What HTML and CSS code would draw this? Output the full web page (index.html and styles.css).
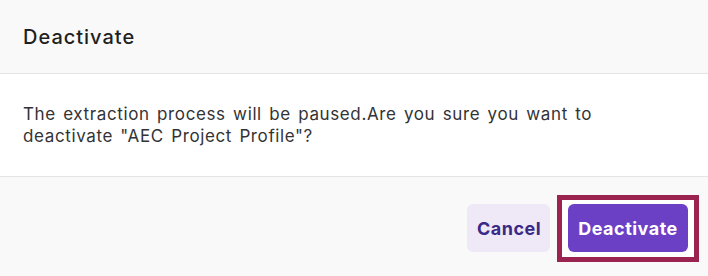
FILE: index.html
```html
<!DOCTYPE html>
<html lang="en">
<head>
<meta charset="utf-8">
<title>Deactivate</title>
<link rel="stylesheet" href="styles.css">
</head>
<body>
<div class="modal">
  <div class="modal-header">
    <h2 class="modal-title">Deactivate</h2>
  </div>
  <div class="modal-body">
    <p class="modal-text">The extraction process will be paused.Are you sure you want to deactivate "AEC Project Profile"?</p>
  </div>
  <div class="modal-footer">
    <button class="btn btn-cancel">Cancel</button>
    <span class="highlight">
      <button class="btn btn-primary">Deactivate</button>
    </span>
  </div>
</div>
</body>
</html>
```

FILE: styles.css
```css
html, body {
  margin: 0;
  padding: 0;
  background: #ffffff;
}
body {
  font-family: Inter, "Noto Sans", sans-serif;
  width: 708px;
  height: 276px;
  overflow: hidden;
}
.modal {
  display: flex;
  flex-direction: column;
}
.modal-header {
  height: 74px;
  background: #f9f9f9;
  border-bottom: 1px solid #e4e4e4;
  display: flex;
  align-items: center;
  padding: 0 23px;
  box-sizing: border-box;
}
.modal-title {
  margin: 0;
  font-size: 20px;
  font-weight: 500;
  letter-spacing: 1px;
  color: #1f1f22;
}
.modal-body {
  height: 103px;
  box-sizing: border-box;
  border-bottom: 1px solid #e4e4e4;
  padding: 29px 23px 0;
}
.modal-text {
  margin: 0;
  font-size: 17px;
  line-height: 22px;
  letter-spacing: 0.62px;
  word-spacing: 2px;
  color: #333336;
}
.modal-footer {
  background: #f9f9f9;
  height: 99px;
  box-sizing: border-box;
  padding: 18px 9px 0 0;
  display: flex;
  justify-content: flex-end;
  align-items: flex-start;
  gap: 7px;
}
.btn {
  font-family: Inter, "Noto Sans", sans-serif;
  font-size: 18px;
  font-weight: 700;
  letter-spacing: 0.5px;
  height: 48px;
  border: none;
  border-radius: 6px;
  padding: 0 10px;
  cursor: pointer;
}
.btn-cancel {
  margin-top: 9px;
  width: 83px;
  background: #efe9f7;
  color: #3a2a88;
}
.btn-primary {
  width: 120px;
  background: #6c40c4;
  color: #ffffff;
}
.highlight {
  display: flex;
  background: #ffffff;
  border: 5px solid #9b2350;
  padding: 4px 6px 5px;
}
```
